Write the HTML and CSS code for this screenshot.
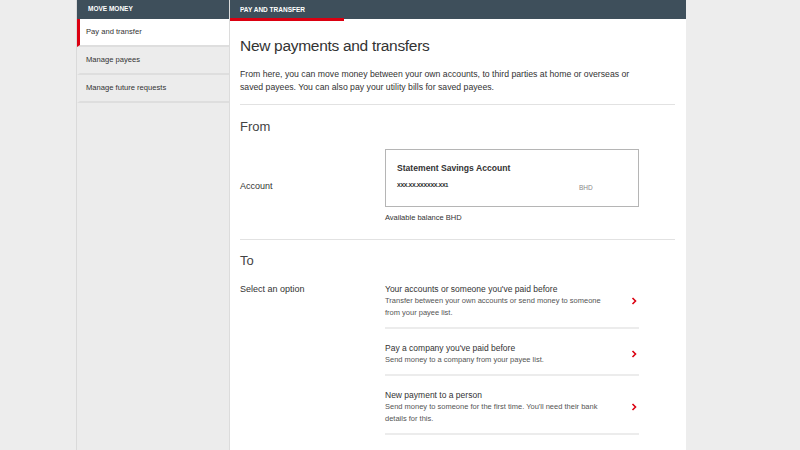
FILE: index.html
```html
<!DOCTYPE html>
<html lang="en">
<head>
<meta charset="utf-8">
<title>Pay and transfer</title>
<link rel="stylesheet" href="styles.css">
</head>
<body>
<div class="app">
  <aside class="sidebar">
    <div class="side-head">MOVE MONEY</div>
    <nav class="side-nav">
      <a class="side-item active">Pay and transfer</a>
      <a class="side-item">Manage payees</a>
      <a class="side-item">Manage future requests</a>
    </nav>
  </aside>
  <main class="main">
    <div class="tabs"><span class="tab active">PAY AND TRANSFER</span></div>
    <div class="content">
      <h1 class="title">New payments and transfers</h1>
      <p class="intro">From here, you can move money between your own accounts, to third parties at home or overseas or saved payees. You can also pay your utility bills for saved payees.</p>

      <section class="block from">
        <h2 class="block-title">From</h2>
        <div class="field">
          <div class="field-label">Account</div>
          <div class="field-value">
            <div class="account-box">
              <div class="acc-name">Statement Savings Account</div>
              <div class="acc-row">
                <span class="acc-num">XXX.XX.XXXXXX.XX1</span>
                <span class="acc-cur">BHD</span>
              </div>
            </div>
            <div class="balance">Available balance BHD</div>
          </div>
        </div>
      </section>

      <section class="block to">
        <h2 class="block-title">To</h2>
        <div class="field">
          <div class="field-label">Select an option</div>
          <div class="field-value">
            <ul class="options">
              <li class="option">
                <div class="opt-text">
                  <div class="opt-title">Your accounts or someone you've paid before</div>
                  <div class="opt-desc">Transfer between your own accounts or send money to someone from your payee list.</div>
                </div>
                <svg class="chev" width="6" height="8" viewBox="0 0 6 8"><polyline points="1.5,1 4.5,4 1.5,7" fill="none" stroke="#db0011" stroke-width="1.6"/></svg>
              </li>
              <li class="option">
                <div class="opt-text">
                  <div class="opt-title">Pay a company you've paid before</div>
                  <div class="opt-desc">Send money to a company from your payee list.</div>
                </div>
                <svg class="chev" width="6" height="8" viewBox="0 0 6 8"><polyline points="1.5,1 4.5,4 1.5,7" fill="none" stroke="#db0011" stroke-width="1.6"/></svg>
              </li>
              <li class="option">
                <div class="opt-text">
                  <div class="opt-title">New payment to a person</div>
                  <div class="opt-desc">Send money to someone for the first time. You'll need their bank details for this.</div>
                </div>
                <svg class="chev" width="6" height="8" viewBox="0 0 6 8"><polyline points="1.5,1 4.5,4 1.5,7" fill="none" stroke="#db0011" stroke-width="1.6"/></svg>
              </li>
              <li class="option">
                <div class="opt-text">
                  <div class="opt-title">Pay a company</div>
                  <div class="opt-desc">Send money to a company for the first time.</div>
                </div>
                <svg class="chev" width="6" height="8" viewBox="0 0 6 8"><polyline points="1.5,1 4.5,4 1.5,7" fill="none" stroke="#db0011" stroke-width="1.6"/></svg>
              </li>
            </ul>
          </div>
        </div>
      </section>
    </div>
  </main>
</div>
</body>
</html>
```
FILE: styles.css
```css
* { box-sizing: border-box; }
html, body { margin: 0; padding: 0; }
body {
  background: #ededed;
  font-family: "Liberation Sans", Arial, sans-serif;
  color: #333;
  height: 450px;
  overflow: hidden;
}
.app {
  margin-left: 76px;
  width: 610px;
  display: flex;
  min-height: 450px;
  border-left: 1px solid #dadada;
}
.sidebar {
  width: 153px;
  flex: none;
  background: #ececec;
  border-right: 1px solid #dcdcdc;
}
.side-head {
  height: 19px;
  background: #3e4f5b;
  color: #fff;
  font-weight: bold;
  font-size: 6.5px;
  padding: 5px 0 0 11px;
}
.side-nav { display: flex; flex-direction: column; }
.side-item {
  display: block;
  height: 28px;
  line-height: 25px;
  font-size: 7.6px;
  padding-left: 6px;
  color: #333;
  border-bottom: 2px solid #dedede;
  border-left: 3px solid transparent;
}
.side-item.active {
  background: #fff;
  border-left-color: #db0011;
}
.main {
  flex: 1;
  background: #fff;
}
.tabs {
  height: 19px;
  background: #3e4f5b;
  display: flex;
}
.tab {
  width: 114px;
  height: 21px;
  padding: 6px 0 0 10px;
  font-size: 6.5px;
  font-weight: bold;
  color: #fff;
  background: #3e4f5b;
  border-bottom: 3px solid #db0011;
}
.content {
  padding: 17px 11px 0 10px;
}
.title {
  margin: 0;
  font-weight: normal;
  font-size: 15.5px;
  line-height: 20px;
  color: #333;
  letter-spacing: -0.3px;
}
.intro {
  margin: 12px 0 0;
  font-size: 8.7px;
  line-height: 13px;
  color: #333;
  padding: 0 38px 10px 0;
  border-bottom: 1px solid #e2e2e2;
}
.block {
  border-bottom: 1px solid #e2e2e2;
}
.block-title {
  margin: 0;
  font-weight: normal;
  font-size: 13px;
  line-height: 16px;
  padding-top: 14px;
  color: #444;
}
.to .block-title { padding-top: 13px; }
.field {
  display: grid;
  grid-template-columns: 145px 1fr;
  margin-top: 14px;
}
.field-label {
  font-size: 9px;
  line-height: 12px;
  align-self: start;
}
.from .field-label { padding-top: 31px; }
.account-box {
  width: 254px;
  height: 58px;
  border: 1px solid #b5b5b5;
  padding: 12px 11px 0 11px;
}
.acc-name {
  font-weight: bold;
  font-size: 8.6px;
  line-height: 12px;
}
.acc-row {
  display: flex;
  margin-top: 7px;
}
.acc-num {
  width: 182px;
  font-size: 5.6px;
  letter-spacing: -0.3px;
  line-height: 9px;
  color: #222;
  font-weight: bold;
}
.acc-cur {
  font-size: 6.5px;
  color: #888;
  padding-top: 3px;
}
.balance {
  font-size: 7.5px;
  margin-top: 6px;
  padding-bottom: 16px;
  line-height: 10px;
}
.options {
  list-style: none;
  margin: 0;
  padding: 0;
  width: 254px;
}
.option {
  display: flex;
  align-items: center;
  border-bottom: 2px solid #ececec;
  padding: 13px 0 8px 0;
}
.option:first-child { padding-top: 0; }
.opt-text { width: 230px; }
.opt-title {
  font-size: 8.5px;
  line-height: 12px;
  color: #333;
}
.opt-desc {
  font-size: 7.5px;
  line-height: 12px;
  color: #555;
  width: 220px;
}
.chev { margin-left: 16px; flex: none; }
```
